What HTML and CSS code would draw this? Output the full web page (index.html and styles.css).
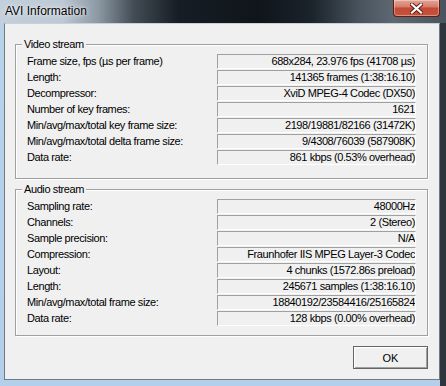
FILE: index.html
```html
<!doctype html>
<html>
<head lang='en'>
  <meta charset='utf-8'>
  <meta name='viewport' content='width=device-width'>
  <title>AVI Information</title>
  <link rel="stylesheet" href="styles.css">
</head>
<body>
<div class="window">
  <div class="titlebar">
    <span class="title">AVI Information</span>
    <button class="close" aria-label="Close">
      <svg width="13" height="11" viewBox="0 0 13 11">
        <path d="M2 1.5 L11 9.5 M11 1.5 L2 9.5" stroke="#5a1a12" stroke-width="4" stroke-linecap="square"/>
        <path d="M2 1.5 L11 9.5 M11 1.5 L2 9.5" stroke="#fff" stroke-width="2.2" stroke-linecap="square"/>
      </svg>
    </button>
  </div>

  <div class="client">
    <fieldset class="group">
      <legend>Video stream</legend>
      <div class="rows">
        <span class="label">Frame size, fps (µs per frame)</span>
        <span class="value">688x284, 23.976 fps (41708 µs)</span>
        <span class="label">Length:</span>
        <span class="value">141365 frames (1:38:16.10)</span>
        <span class="label">Decompressor:</span>
        <span class="value">XviD MPEG-4 Codec (DX50)</span>
        <span class="label">Number of key frames:</span>
        <span class="value">1621</span>
        <span class="label">Min/avg/max/total key frame size:</span>
        <span class="value">2198/19881/82166 (31472K)</span>
        <span class="label">Min/avg/max/total delta frame size:</span>
        <span class="value">9/4308/76039 (587908K)</span>
        <span class="label">Data rate:</span>
        <span class="value">861 kbps (0.53% overhead)</span>
      </div>
    </fieldset>

    <fieldset class="group group--audio">
      <legend>Audio stream</legend>
      <div class="rows">
        <span class="label">Sampling rate:</span>
        <span class="value">48000Hz</span>
        <span class="label">Channels:</span>
        <span class="value">2 (Stereo)</span>
        <span class="label">Sample precision:</span>
        <span class="value">N/A</span>
        <span class="label">Compression:</span>
        <span class="value">Fraunhofer IIS MPEG Layer-3 Codec</span>
        <span class="label">Layout:</span>
        <span class="value">4 chunks (1572.86s preload)</span>
        <span class="label">Length:</span>
        <span class="value">245671 samples (1:38:16.10)</span>
        <span class="label">Min/avg/max/total frame size:</span>
        <span class="value">18840192/23584416/25165824</span>
        <span class="label">Data rate:</span>
        <span class="value">128 kbps (0.00% overhead)</span>
      </div>
    </fieldset>

    <div class="actions">
      <button class="ok">OK</button>
    </div>
  </div>
</div>
</body>
</html>
```

FILE: styles.css
```css
html, body, fieldset, legend {
  margin: 0;
  padding: 0;
}

html {
  box-sizing: border-box;
}

*, *:before, *:after {
  box-sizing: inherit;
}

body {
  font-family: 'Liberation Sans', Arial, sans-serif;
  font-size: 11px;
  letter-spacing: -0.4px;
  color: #000;
  background: #b3cfeb;
}

.window {
  width: 446px;
  height: 386px;
  display: flex;
  flex-direction: column;
  background:
    linear-gradient(to right, transparent 440px, #2e353c 440px),
    linear-gradient(to bottom, #b9d2ea, #b3cfeb);
}

/* aero title bar */
.titlebar {
  height: 23px;
  flex: none;
  display: flex;
  justify-content: space-between;
  align-items: flex-start;
  padding: 0 6px 0 5px;
  background: linear-gradient(to right,
    #c3cfdb 0%, #bcc8d4 14%, #8c98a3 22%, #434c55 30%,
    #161d24 40%, #0f151b 58%, #1b232b 70%, #46515b 80%, #5d6873 88%, #4a545e 100%);
}

.title {
  font-family: 'Liberation Sans', Arial, sans-serif;
  font-size: 12px;
  letter-spacing: 0;
  line-height: 16px;
  margin-top: 3px;
  text-shadow: 0 0 6px rgba(255, 255, 255, .9), 0 0 2px rgba(255, 255, 255, .8);
}

.close {
  width: 47px;
  height: 17px;
  padding: 0;
  border: 1px solid #5e1d15;
  border-top: none;
  border-radius: 0 0 4px 4px;
  display: flex;
  align-items: center;
  justify-content: center;
  background: linear-gradient(to bottom, #e5a394 0%, #d7806f 40%, #c54a36 52%, #c8533c 100%);
  box-shadow: inset 0 0 0 1px rgba(255, 255, 255, .35);
}

.client {
  flex: 1;
  margin: 0 6px 6px 4px;
  padding: 13px 11px 10px 10px;
  display: flex;
  flex-direction: column;
  background: #f0f0f0;
  border: 1px solid #6f7a85;
  border-top-color: #c9d0d6;
}

.group {
  padding: 3px 11px 13px 11px;
  border: 1px solid #a0a0a0;
  box-shadow: inset 1px 1px 0 #fff, 1px 1px 0 #fff;
}

.group--audio {
  margin-top: 3px;
  padding-bottom: 9px;
}

.group legend {
  margin-left: -5px;
  padding: 0 2px;
  line-height: 14px;
  background: #f0f0f0;
}

.rows {
  display: grid;
  grid-template-columns: 1fr 199px;
  row-gap: 1px;
}

.label {
  line-height: 15px;
  white-space: nowrap;
}

.value {
  height: 15px;
  padding-left: 2px;
  line-height: 13px;
  text-align: right;
  white-space: nowrap;
  overflow: hidden;
  border-top: 1px solid #a0a0a0;
  border-left: 1px solid #a0a0a0;
  border-bottom: 1px solid #fff;
  border-right: 1px solid #fff;
}

.actions {
  margin-top: auto;
  display: flex;
  justify-content: flex-end;
}

.ok {
  width: 75px;
  height: 23px;
  font-family: 'Liberation Sans', Arial, sans-serif;
  font-size: 11px;
  color: #000;
  background: #f0f0f0;
  border: 1px solid #646464;
  box-shadow: inset 1px 1px 0 #fff, inset -1px -1px 0 #a0a0a0;
}
```
